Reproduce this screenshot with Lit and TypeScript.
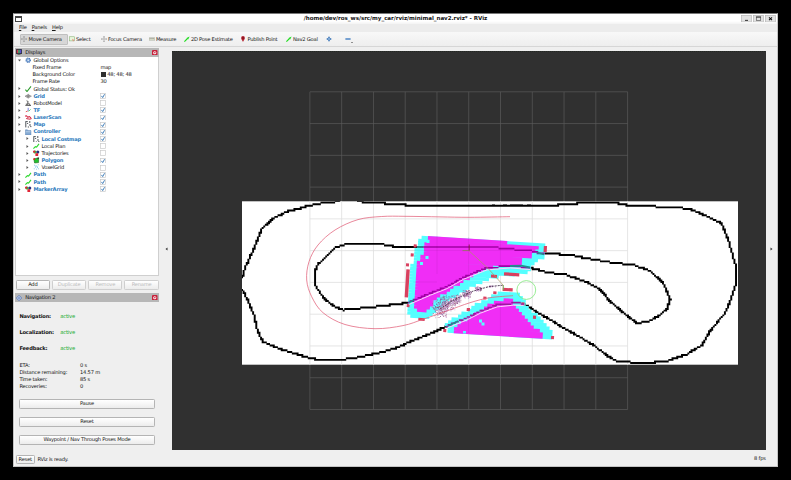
import { LitElement, html, svg, css } from "lit";
import { customElement, property } from "lit/decorators.js";

type Pt = [number, number];

/* ---------- icons, all on a 16x16 grid ---------- */
const cross = (c: string) => svg`<path d="M8 1v14M1 8h14" stroke=${c} stroke-width="2"/><path d="M8 0l3 3H5zM8 16l3-3H5zM0 8l3-3v6zM16 8l-3-3v6z" fill=${c}/><circle cx="8" cy="8" r="2" fill="#fff" stroke=${c}/>`;
const ICONS: Record<string, unknown> = {
  move: cross("#9a9a9a"),
  focus: cross("#a4a4a4"),
  select: svg`<rect x="1" y="2" width="14" height="11" fill="#e8f6dc" stroke="#8fb57e" stroke-width="1.6"/><path d="M8 7l7 4-3 1-1 3z" fill="#e44" opacity=".6"/>`,
  measure: svg`<rect x="0" y="5" width="16" height="6" fill="#d9dccb" stroke="#8b9080"/><path d="M3 5v3M6 5v3M9 5v3M12 5v3" stroke="#6d7265"/>`,
  pose: svg`<path d="M1 15L10 6" stroke="#1fdc1f" stroke-width="3"/><path d="M15 1L7 5l4 4z" fill="#1fdc1f"/>`,
  pin: svg`<path d="M8 16C7 11 3 9 3 5a5 5 0 0 1 10 0c0 4-4 6-5 11z" fill="#b3202e"/><circle cx="8" cy="5" r="2" fill="#5c0a12"/>`,
  plus: svg`<path d="M8 2v12M2 8h12" stroke="#4d80bb" stroke-width="5"/><path d="M8 4v8M4 8h8" stroke="#9fc1e6" stroke-width="2"/>`,
  minus: svg`<path d="M1 8h14" stroke="#4d86c6" stroke-width="4"/>`,
  displays: svg`<rect x="0" y="0" width="16" height="13" rx="1" fill="#2b2f3a"/><rect x="2" y="2" width="4" height="9" fill="#d33a50"/><rect x="6" y="2" width="4" height="9" fill="#4ab96a"/><rect x="10" y="2" width="4" height="9" fill="#5a4fd0"/><path d="M4 15h8" stroke="#444" stroke-width="2"/>`,
  gear: svg`<circle cx="8" cy="8" r="5.5" fill="#7ba3d6" stroke="#4876b4" stroke-width="2.6" stroke-dasharray="2.6 1.6"/><circle cx="8" cy="8" r="2" fill="#e8f0fa"/>`,
  ok: svg`<path d="M1 9l4 5L15 1" fill="none" stroke="#2b9a2b" stroke-width="2.6"/>`,
  grid: svg`<path d="M0 8l8-4 8 4-8 4zM4 6l8 4M12 6l-8 4M8 2v12" fill="#c0c0c0" stroke="#777" stroke-width="1.4"/>`,
  robot: svg`<path d="M4 2l4 2-2 5 6 1v4M1 14h14" fill="none" stroke="#555" stroke-width="2.4"/><rect x="2" y="9" width="6" height="5" fill="#777"/>`,
  tf: svg`<path d="M2 12l5-2" stroke="#e03a3a" stroke-width="2"/><path d="M8 10V2" stroke="#5966d8" stroke-width="2"/><path d="M9 11l5-5" stroke="#35c23c" stroke-width="2"/>`,
  scan: svg`<path d="M0 6c4-5 6 4 8 2s5-3 8 5M3 11c3 2 7 1 11 2" fill="none" stroke="#d42a45" stroke-width="2.6"/>`,
  map: svg`<path d="M2 16V2M1 1h6M12 0v5M5 6h3M10 10h5M7 15h3M13 14h3" fill="none" stroke="#454b51" stroke-width="2.4"/>`,
  folder: svg`<path d="M1 2h5l2 2h7v11H1z" fill="#84a9d2" stroke="#4f7aab"/><path d="M2 7h12" stroke="#dbe8f6" stroke-width="1.5"/>`,
  path: svg`<path d="M1 14l5-5 3 1 6-8" fill="none" stroke="#2fd82f" stroke-width="2.8"/>`,
  marker: svg`<circle cx="5" cy="5" r="4" fill="#2bc43a"/><circle cx="12" cy="5" r="3.8" fill="#27307e"/><circle cx="3" cy="4" r="3" fill="#e02536"/><rect x="6" y="8" width="7" height="7" fill="#e02536"/>`,
  poly: svg`<path d="M2 5l12-3v12l-10 1z" fill="#20c32e" stroke="#135b1c" stroke-width="1.4"/><circle cx="3" cy="5" r="2.3" fill="#d22"/><circle cx="13" cy="3" r="2" fill="#333"/>`,
  voxel: svg`<path d="M3 3h2M8 5h2M12 2h2M5 8h2M10 9h2M2 12h2M8 13h2M13 12h2M6 4v2M11 6v2" stroke="#57b4e4" stroke-width="2"/>`,
  nav: svg`<path d="M8 1l7 7-7 7-7-7z" fill="#cfdaf0" stroke="#3f65b0" stroke-width="2"/><path d="M5 8h6M8 5v6" stroke="#3f65b0" stroke-width="1.5"/>`,
  close: svg`<rect width="16" height="16" rx="3" fill="#c8203a"/><circle cx="8" cy="8" r="4.6" fill="#fff"/><path d="M5.5 8h5" stroke="#c8203a" stroke-width="3"/>`,
};

@customElement("rv-icon")
class RvIcon extends LitElement {
  @property() name = "";
  static styles = css`
    :host { display: block; width: 6px; height: 6px; flex: none; }
    svg { display: block; width: 100%; height: 100%; }
  `;
  render() {
    return html`<svg viewBox="0 0 16 16" fill="none">${ICONS[this.name]}</svg>`;
  }
}

/* ---------- scene geometry ---------- */
const METRE = 31.77;
const CELL = METRE * 0.05;

const OUTER: Pt[] = [[242.5,277],[245,268],[253.3,250],[261.7,229.3],[272.3,219],[286.7,211.7],[308.3,206],[324.3,202.7],[338.3,201.5]];
const OUTER_TOP: Pt[] = [[358,201.5],[380,203],[400,204.5],[420,206],[493,206],[540,205.7],[565,204.7],[583,202.8],[616,202.8],[630,205.7],[676.7,207.3],[693.3,210],[721.7,223.3],[728.3,240],[736,266.7],[736,283.3],[730.7,300],[725,313.3],[710.7,330],[702.3,345],[686.7,354.3],[666.7,361],[648,363],[618,361.7],[608,356],[593.3,345],[560,325.7],[540,314],[523.3,303.5]];
const OUTER_LOW: Pt[] = [[447,326],[430,334],[413,340.7],[396.7,347.7],[380,352.7],[361.7,356.7],[338.3,360.3],[321.7,360.3],[308.3,357.7],[278.3,348.3],[263.3,341.7],[257.7,331.7],[254,315],[247.7,300],[242.5,290]];
const INNER_TOP: Pt[] = [[408.3,302.7],[396.7,304.3],[381.7,306],[343.3,310],[335,306.7],[325,299.3],[316.7,288],[315,283],[315,273],[316.7,266],[335,247.7],[346.7,243.7],[380,243.7],[393.3,246.3],[405,247],[420,247]];
const INNER_RIGHT: Pt[] = [[543.3,254],[566.7,254.3],[586.7,258.3],[616.7,263.3],[633.3,264.7],[650,271],[663.3,282.7],[670.3,300],[666.7,309.3],[656.7,317.3],[646,322.3],[636.7,322.7],[625,314.3],[611.7,302.7],[598.3,288.3],[586.7,282.3],[565,274.3],[548,272.7],[530,267.7]];
const WALL_A: Pt[] = [[420,247],[490,247],[513,249.3],[530,250.7],[543.3,254]];
const WALL_B: Pt[] = [[530,267.7],[510,266],[486.7,268],[463.3,277.3],[446.7,286.7],[430,293.3],[408.3,302.7]];
const WALL_C: Pt[] = [[523.3,303.5],[513,303.3],[496.7,305],[480,311.3],[466.7,318],[447,326]];

const CYAN_A: Pt[] = [[421.7,235.7],[430,236],[496.7,240],[545.5,243.3],[545,256.7],[540,260],[532,267],[528,274],[506,275.5],[486.7,280.5],[466.7,290],[450,300],[438,309.5],[430,318],[416.7,319.5],[408,315],[407,296.7],[412.7,260],[416.7,245]];
const MAGENTA_A: Pt[] = [[430,236],[496.7,241.7],[536.7,245.3],[538,250.7],[531,252],[530.7,258],[523.5,259],[521.7,266],[487,267.5],[466.7,279.5],[450,290],[438,298],[430,306.7],[425,312.7],[416.7,310.7],[414,303],[415,268],[421.7,256.7],[424,245]];
const CYAN_B: Pt[] = [[448,332],[445,323],[460,315],[480,301.5],[503,291],[519,291.7],[525,302],[533,311],[543,322],[552.5,331],[552.7,338.5]];
const MAGENTA_B: Pt[] = [[452,333],[456,328],[463,321.5],[480,311],[490,304.5],[500,300.5],[511,298.5],[515,306],[521.5,313.3],[531.7,325],[543,334],[544.3,338.2]];
const PIVOT: Pt = [421.7, 235.7];
const TILT = 3.6;

// x, y, width, height of obstacle cells
const OBSTACLES = [[405.5,269.3,3.4,28],[410.7,253.3,3,3.2],[413.7,244.3,3,3.2],[406,263.4,3,3],[406.7,304,2.8,3.2],[418.3,318,6.4,2.8],[443.3,329,3,3.2],[466.7,308,3.2,3.2],[483.3,296.7,3.2,2.8],[493.3,291.3,3.2,2.8],[502.7,288,10,3.2],[491,274.7,6,3],[504,272.7,15.3,3.2],[543.7,246,3.2,6],[521.3,302.3,3.2,3],[533,315.7,3,3.2],[551,336,3,3.2]];

const ROUTE: Pt[] = [[510,216.7],[470,217.3],[440,216.9],[405,216.3],[381.7,216.5],[358,219.6],[335,230],[318,245],[309,261.7],[306.7,280],[311.7,296.7],[323,312.7],[345,324.5],[375,328.7],[403,325.6],[423,319.3],[446.7,311],[470,302.7],[490,297.7],[513,295.7]];

// Smooth curve through all the points (Catmull-Rom as cubic beziers).
function smooth(p: Pt[]): string {
  let d = `M${p[0]}`;
  for (let i = 0; i < p.length - 1; i++) {
    const a = p[Math.max(i - 1, 0)], b = p[i], c = p[i + 1], e = p[Math.min(i + 2, p.length - 1)];
    d += `C${b[0] + (c[0] - a[0]) / 6},${b[1] + (c[1] - a[1]) / 6} ${c[0] - (e[0] - b[0]) / 6},${c[1] - (e[1] - b[1]) / 6} ${c}`;
  }
  return d;
}

// Occupancy cells along a polyline.
function trace(points: Pt[], size = 1.95): string {
  const seen = new Set<string>();
  let d = "";
  for (let i = 0; i < points.length - 1; i++) {
    const [ax, ay] = points[i], [bx, by] = points[i + 1];
    const n = Math.ceil(Math.hypot(bx - ax, by - ay) / 1.1);
    for (let k = 0; k <= n; k++) {
      const cx = Math.round((ax + ((bx - ax) * k) / n - 242) / CELL);
      const cy = Math.round((ay + ((by - ay) * k) / n - 201) / CELL);
      const key = cx + "," + cy;
      if (seen.has(key)) continue;
      seen.add(key);
      d += `M${(242 + cx * CELL - size / 2).toFixed(2)} ${(201 + cy * CELL - size / 2).toFixed(2)}h${size}v${size}h-${size}z`;
    }
  }
  return d;
}

// Cells whose centre lies in the polygon, in the tilted costmap frame.
function fillCells(poly: Pt[], size: number): string {
  const a = (-TILT * Math.PI) / 180;
  const q = poly.map(([x, y]): Pt => {
    const dx = x - PIVOT[0], dy = y - PIVOT[1];
    return [dx * Math.cos(a) - dy * Math.sin(a), dx * Math.sin(a) + dy * Math.cos(a)];
  });
  let d = "";
  for (let r = -2; r < 40; r++) {
    const y = (r + 0.5) * size;
    const xs: number[] = [];
    q.forEach((p, i) => {
      const n = q[(i + 1) % q.length];
      if (p[1] > y !== n[1] > y) xs.push(p[0] + ((y - p[1]) / (n[1] - p[1])) * (n[0] - p[0]));
    });
    xs.sort((m, n) => m - n);
    for (let i = 0; i + 1 < xs.length; i += 2) {
      const x0 = Math.round(xs[i] / size) * size, x1 = Math.round(xs[i + 1] / size) * size;
      if (x1 > x0) d += `M${(PIVOT[0] + x0).toFixed(2)} ${(PIVOT[1] + r * size).toFixed(2)}h${(x1 - x0).toFixed(2)}v${(size + 0.05).toFixed(2)}h${(x0 - x1).toFixed(2)}z`;
    }
  }
  return d;
}

// Pose particles: centre x, centre y, spread x, spread y, count.
const SWARMS = [[439.5,308.5,8.5,9,190],[447,303,9,8,190],[456,299,5.5,5.5,110],[466.5,293.7,5,5,100],[478,288.8,5,2.8,55],[490,286,6,1,14]];
function particles() {
  let s = 7;
  const rnd = () => ((s = (s * 16807) % 2147483647) / 2147483647);
  const tint = ["#7d3a8e", "#b884c6", "#6d4576", "#c795d2", "#a5607f"];
  const sets = ["", "", "", "", ""];
  for (const [cx, cy, rx, ry, n] of SWARMS) {
    for (let i = 0; i < n; i++) {
      const x = cx + (rnd() + rnd() - 1) * rx, y = cy + (rnd() + rnd() - 1) * ry;
      sets[i % 5] += `M${x.toFixed(1)} ${y.toFixed(1)}h.9v.9h-.9z`;
    }
  }
  return sets.map((d, i) => svg`<path d=${d} fill=${tint[i]} opacity=".75"/>`);
}

@customElement("rv-scene")
class RvScene extends LitElement {
  static styles = css`
    :host { display: block; background: #303030; }
    svg { display: block; width: 594px; height: 399px; }
  `;
  render() {
    const lines = Array.from({ length: 11 }, (_, i) => i);
    const gridPath = lines.map((i) => `M${309.9 + i * METRE} 91.8v317.7M309.9 ${91.8 + i * METRE}h317.7`).join("");
    const line = (p: Pt[]) => "M" + p.join("L");
    const shift = (p: Pt[], dy: number) => p.map(([x, y]): Pt => [x + 0.4, y + dy]);
    return html`<svg viewBox="172 51 594 399" fill="none">
      <defs><clipPath id="floor"><rect x="242" y="201.3" width="496" height="163.4"/></clipPath></defs>
      <path d=${gridPath} stroke="#5a5a5a" stroke-width=".7"/>
      <rect x="242" y="201.3" width="496" height="163.4" fill="#fff"/>
      <g clip-path="url(#floor)">
        <path d=${gridPath} stroke="#dedede" stroke-width=".8"/>
        ${[OUTER, OUTER_TOP, OUTER_LOW, INNER_TOP, INNER_RIGHT].map((p) => svg`<path d=${trace(p)} fill="#000"/>`)}
        <path d="M492 204.6h3v1h-3zM503 204.6h4v1h-4zM510 204.6h13v1h-13zM527 204.6h4v1h-4z" fill="#000"/>
      </g>
      <g transform="rotate(${TILT} ${PIVOT[0]} ${PIVOT[1]})">
        <path d=${fillCells(CYAN_A, CELL * 2)} fill="#55ffff"/>
        <path d=${fillCells(CYAN_B, CELL * 2)} fill="#55ffff"/>
        <path d=${fillCells(MAGENTA_A, CELL * 2)} fill="#f02df6"/>
        <path d=${fillCells(MAGENTA_B, CELL * 2)} fill="#f02df6"/>
      </g>
      <path d="M425.5 256h3v3h-3zM426.5 240h3v3h-3zM420 262h3v3h-3zM479 319.5h3v3h-3zM481.5 322.5h3v3h-3zM463 331h3v2.5h-3z" fill="#55ffff"/>
      <g fill="#d9405f">${OBSTACLES.map(([x, y, w, h]) => svg`<rect x=${x} y=${y} width=${w} height=${h} transform="rotate(${TILT} ${x + w / 2} ${y + h / 2})"/>`)}</g>
      <path d=${trace(WALL_A, 1.6)} fill="#a000a4"/>
      <path d=${trace(WALL_B, 1.6)} fill="#a000a4"/>
      <path d=${trace(WALL_C, 1.6)} fill="#9c1aa0"/>
      <path d="M537 252.5l7 2M510 266l11-.3 9 1.8M448 326l10-5M417 247h6M409 302.5l5-2.5" stroke="#1f8f8f" stroke-width="1.8"/>
      <path d=${line(shift(WALL_B, 1.9))} stroke="#fbd8fb" stroke-width="1"/>
      <path d=${line(shift(WALL_C, 1.9))} stroke="#fbd8fb" stroke-width="1"/>
      <path d="M437 236v38M405 250.4h133M437 282h-24M468.6 237v38M500.4 240v26M500.4 302v32M468.6 318v15" stroke="#000" stroke-opacity=".07" stroke-width=".8"/>
      ${particles()}
      <path d="M440 309l12-8 10-5 10-4.5 8-2.5 10-2.5 13-1.3" stroke="#33203a" stroke-width=".8" stroke-dasharray="2 1"/>
      <path d=${smooth(ROUTE)} stroke="#e2607a" stroke-width=".75"/>
      <path d="M468.6 250.4L488 268.3l15 16.7v5.5" stroke="#a99a62" stroke-width=".7"/>
      <path d="M469.2 244.5v6.2" stroke="#7a2030" stroke-width=".8"/><path d="M462.5 250.6h6.5" stroke="#8b7a55" stroke-width=".8"/>
      <path d="M503.5 285v5" stroke="#6fae5a" stroke-width=".7"/>
      <circle cx="526.3" cy="290" r="9.4" stroke="#7fe87a" stroke-width=".8"/>
      <path d="M172 51.3h594" stroke="#1d241d" stroke-width=".8" stroke-dasharray="1 1"/>
    </svg>`;
  }
}

/* ---------- displays tree ---------- */
interface Row { t: string; i?: string; lvl?: number; a?: string; b?: boolean; c?: boolean; v?: string; sw?: boolean }
const ROWS: Row[] = [
  { t: "Global Options", i: "gear", a: "open" },
  { t: "Fixed Frame", v: "map" },
  { t: "Background Color", v: "48; 48; 48", sw: true },
  { t: "Frame Rate", v: "30" },
  { t: "Global Status: Ok", i: "ok", a: "shut" },
  { t: "Grid", i: "grid", a: "shut", b: true, c: true },
  { t: "RobotModel", i: "robot", a: "shut", c: false },
  { t: "TF", i: "tf", a: "shut", b: true, c: true },
  { t: "LaserScan", i: "scan", a: "shut", b: true, c: true },
  { t: "Map", i: "map", a: "shut", b: true, c: true },
  { t: "Controller", i: "folder", a: "open", b: true, c: true },
  { t: "Local Costmap", i: "map", a: "shut", b: true, c: true, lvl: 1 },
  { t: "Local Plan", i: "path", a: "shut", c: false, lvl: 1 },
  { t: "Trajectories", i: "marker", a: "shut", c: false, lvl: 1 },
  { t: "Polygon", i: "poly", a: "shut", b: true, c: true, lvl: 1 },
  { t: "VoxelGrid", i: "voxel", a: "shut", c: false, lvl: 1 },
  { t: "Path", i: "path", a: "shut", b: true, c: true },
  { t: "Path", i: "path", a: "shut", b: true, c: true },
  { t: "MarkerArray", i: "marker", a: "shut", b: true, c: true },
];

@customElement("app-root")
class AppRoot extends LitElement {
  static styles = css`
    :host { display: block; width: 791px; height: 480px; background: #000; overflow: hidden; box-sizing: border-box; padding: 13px 0 0 13px; font: 5.15px/7px "DejaVu Sans", sans-serif; letter-spacing: -.21px; color: #161616; text-rendering: geometricPrecision; }
    * { box-sizing: border-box; }
    .window { width: 765px; height: 454px; background: #efefef; border: 1px solid #c4c4c4; border-width: 0 1px 1px; border-top: 1px solid #777; display: flex; flex-direction: column; box-shadow: inset 1px 0 #f6f6f6; }
    .title { height: 9.5px; flex: none; background: linear-gradient(#fff 70%, #f3f3f3); display: grid; grid-template-columns: 36px 1fr 36px; align-items: center; }
    .winicon { width: 6.5px; height: 5.5px; margin-left: 1px; border: .8px solid #444; border-top-width: 2px; background: #fff; }
    .name { text-align: center; font-weight: bold; font-size: 5.55px; letter-spacing: -.04px; padding-top: 1.4px; color: #111; white-space: nowrap; }
    .winbtns { display: flex; gap: 1.3px; }
    .winbtns svg { width: 10.7px; height: 7.4px; display: block; }
    .menu { height: 8.5px; flex: none; display: flex; align-items: center; gap: 5px; padding: 1.2px 0 0 4.9px; background: #ececec; }
    .menu u { text-decoration-thickness: .4px; text-underline-offset: .5px; }
    .tools { height: 15px; flex: none; display: grid; grid-template-columns: 47.5px 32px 48px 35px 56.5px 45.5px 40px 19.5px 14px; padding: 1.5px 0 1px 6px; background: linear-gradient(#f8f8f8, #eeeeee); border-bottom: 1px solid #d6d6d6; }
    .tool { display: flex; align-items: center; padding-left: 1.2px; gap: 1.2px; white-space: nowrap; }
    .tool span { padding-top: 2.6px; }
    .tool.on { background: #d7d7d7; border: 1px solid #c0c0c0; border-width: .6px 1px; border-radius: 1px; padding-left: .3px; }
    .tool .down { border: 1px solid transparent; border-top: 1.3px solid #333; margin: 6px 0 0 -1px; border-bottom: 0; padding: 0; }
    .main { flex: 1; display: flex; min-height: 0; }
    .dock { width: 144.5px; margin: 0 .8px 0 .7px; padding-top: 1px; flex: none; display: flex; flex-direction: column; }
    .head { height: 8.7px; background: #b7b7b7; display: flex; align-items: center; padding: 0 1.5px; gap: 3px; flex: none; }
    .head span { flex: 1; padding-top: 1.8px; }
    .head .x { width: 5.5px; height: 5.5px; }
    .tree { height: 219.5px; flex: none; background: linear-gradient(90deg, #fff 83.8px, #e6e6e6 83.8px, #e6e6e6 84.5px, #fff 84.5px); border: .7px solid #cfcfcf; border-top: 0; }
    .row { height: 7.17px; display: grid; grid-template-columns: 84.2px 1fr; align-items: center; }
    .left { display: flex; align-items: center; height: 7.17px; padding-left: 2.3px; white-space: nowrap; }
    .left span, .val span { padding-top: 2.3px; }
    .left.lvl1 { padding-left: 10.3px; }
    .left.prop { padding-left: 16.8px; }
    .arrow { width: 3px; height: 3px; margin-right: 4.2px; flex: none; }
    .left rv-icon { width: 6.4px; height: 6.4px; margin-right: 1.9px; }
    .bold { font-weight: bold; color: #2c7abd; letter-spacing: -.21px; }
    .val { display: flex; align-items: center; height: 7.17px; gap: 1.3px; padding-left: .5px; }
    .val .sw { width: 5.3px; height: 5.3px; background: #303030; margin-left: .3px; padding: 0; }
    .chk { width: 5.8px; height: 5.8px; display: block; }
    .chk rect { fill: #fff; stroke: #c8c8c8; stroke-width: 1.6; }
    .chk path { stroke: #2f72b3; stroke-width: 2.2; fill: none; }
    .btns { display: grid; grid-template-columns: repeat(4, 1fr); gap: 2px; padding: 3.5px .5px 3.7px 1px; flex: none; }
    .btn { height: 10px; padding-top: 1px; border: .8px solid #b4b4b4; border-radius: 1.3px; background: linear-gradient(#fff, #ececec); display: flex; align-items: center; justify-content: center; color: #161616; white-space: nowrap; }
    .btn.off { color: #bcbcbc; border-color: #cfcfcf; }
    .nav { padding: 11.6px 4px 0 4px; flex: 1; }
    .stat { display: grid; grid-template-columns: 40.8px 1fr; height: 16.4px; line-height: 7px; padding-left: .7px; }
    .stat b { color: #111; letter-spacing: -.17px; }
    .stat i { font-style: normal; color: #1eae34; font-size: 5.3px; }
    .info { display: grid; grid-template-columns: 60.7px 1fr; height: 6.8px; line-height: 6.8px; padding-left: .7px; }
    .group { padding-top: .4px; height: 35.7px; }
    .nav .btn { margin-bottom: 8px; }
    .handle { width: 12px; display: flex; align-items: center; justify-content: center; color: #333; }
    .dock + .handle { width: 12.2px; flex: none; }
    .handle svg { width: 3px; height: 4px; }
    .view { width: 594px; padding-top: 4px; flex: none; }
    .status { height: 15px; flex: none; display: flex; align-items: center; gap: 2.5px; padding: 2.2px 11.3px 0 1.5px; }
    .status .btn { width: 19.5px; height: 9.4px; padding-top: 1.6px; }
    .status span { padding-top: 1.8px; }
    .status .fps { margin-left: auto; margin-top: -2.6px; }
  `;

  private row(r: Row) {
    const arrow = html`<svg class="arrow" viewBox="0 0 6 6"><path d=${r.a === "open" ? "M0 1h6L3 5z" : "M1 0l4 3-4 3z"} fill="#555"/></svg>`;
    return html`<div class="row">
      <div class="left ${r.lvl ? "lvl1" : r.i ? "" : "prop"}">${r.a ? arrow : ""}${r.i ? html`<rv-icon name=${r.i}></rv-icon>` : ""}<span class=${r.b ? "bold" : ""}>${r.t}</span></div>
      <div class="val">${r.sw ? html`<span class="sw"></span>` : ""}${r.v ? html`<span>${r.v}</span>` : ""}${r.c === undefined ? "" : html`<svg class="chk" viewBox="0 0 14 14"><rect x="1" y="1" width="12" height="12"/>${r.c ? svg`<path d="M3.5 7l3 4 4.5-8"/>` : ""}</svg>`}</div>
    </div>`;
  }

  private winButton(glyph: unknown) {
    return html`<svg viewBox="0 0 32 22" fill="none"><rect x="1" y="1" width="30" height="20" fill="#e2e2e2" stroke="#b5b5b5" stroke-width="2"/>${glyph}</svg>`;
  }

  render() {
    const tools = [["move", "Move Camera"], ["select", "Select"], ["focus", "Focus Camera"], ["measure", "Measure"], ["pose", "2D Pose Estimate"], ["pin", "Publish Point"], ["pose", "Nav2 Goal"], ["plus", ""], ["minus", ""]];
    return html`<div class="window">
      <div class="title">
        <span class="winicon"></span>
        <span class="name">/home/dev/ros_ws/src/my_car/rviz/minimal_nav2.rviz* - RViz</span>
        <div class="winbtns">
          ${this.winButton(svg`<path d="M12 16h9" stroke="#333" stroke-width="3"/>`)}
          ${this.winButton(svg`<rect x="10" y="6" width="13" height="10" stroke="#555" stroke-width="2"/><path d="M9 6h15" stroke="#444" stroke-width="3"/>`)}
          ${this.winButton(svg`<path d="M12 7l9 8M21 7l-9 8" stroke="#111" stroke-width="3"/>`)}
        </div>
      </div>
      <div class="menu"><span><u>F</u>ile</span><span><u>P</u>anels</span><span><u>H</u>elp</span></div>
      <div class="tools">${tools.map(([i, t], n) => html`<div class="tool ${n ? "" : "on"}"><rv-icon name=${i}></rv-icon>${t ? html`<span>${t}</span>` : ""}${i === "minus" ? html`<span class="down"></span>` : ""}</div>`)}</div>
      <div class="main">
        <div class="dock">
          <div class="head"><rv-icon name="displays"></rv-icon><span>Displays</span><rv-icon class="x" name="close"></rv-icon></div>
          <div class="tree">${ROWS.map((r) => this.row(r))}</div>
          <div class="btns"><div class="btn">Add</div><div class="btn off">Duplicate</div><div class="btn off">Remove</div><div class="btn off">Rename</div></div>
          <div class="head"><rv-icon name="nav"></rv-icon><span>Navigation 2</span><rv-icon class="x" name="close"></rv-icon></div>
          <div class="nav">
            ${["Navigation:", "Localization:", "Feedback:"].map((t) => html`<div class="stat"><b>${t}</b><i>active</i></div>`)}
            <div class="group">${[["ETA:", "0 s"], ["Distance remaining:", "14.57 m"], ["Time taken:", "85 s"], ["Recoveries:", "0"]].map(([k, v]) => html`<div class="info"><span>${k}</span><span>${v}</span></div>`)}</div>
            <div class="btn">Pause</div><div class="btn">Reset</div><div class="btn">Waypoint / Nav Through Poses Mode</div>
          </div>
        </div>
        <div class="handle"><svg viewBox="0 0 6 8"><path d="M5 1v6L1 4z" fill="#333"/></svg></div>
        <div class="view"><rv-scene></rv-scene></div>
        <div class="handle"><svg viewBox="0 0 6 8"><path d="M1 1v6l4-3z" fill="#333"/></svg></div>
      </div>
      <div class="status"><div class="btn">Reset</div><span>RViz is ready.</span><span class="fps">8 fps</span></div>
    </div>`;
  }
}
